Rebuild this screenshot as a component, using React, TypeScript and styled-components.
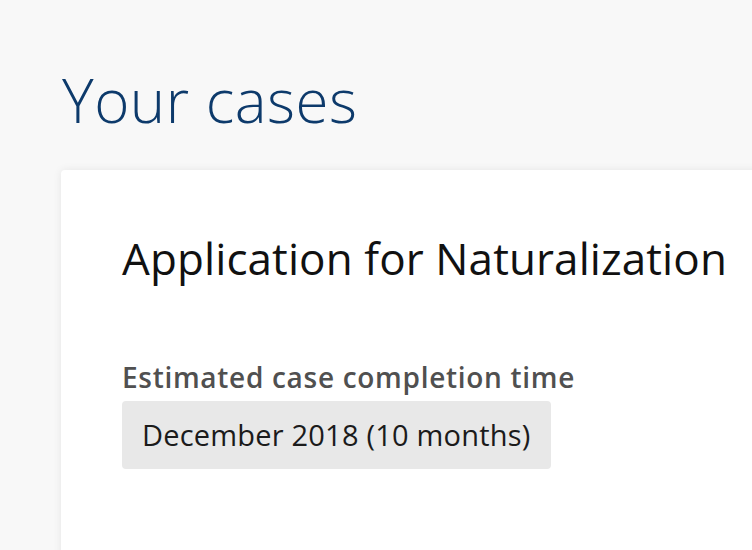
import React from "react";
import styled, { createGlobalStyle } from "styled-components";

const GlobalStyle = createGlobalStyle`
  html, body {
    margin: 0;
    padding: 0;
    background: #f8f8f8;
    font-family: "Open Sans", Lato, sans-serif;
    font-variant-ligatures: none;
    overflow: hidden;
  }
`;

const Page = styled.div`
  width: 752px;
  height: 550px;
  padding: 62px 0 0 61px;
  box-sizing: border-box;
  overflow: hidden;
`;

const Heading = styled.h1`
  margin: 0 0 0 1px;
  font-size: 60px;
  line-height: 76px;
  font-weight: 300;
  letter-spacing: 0.5px;
  color: #0d3a6b;
`;

const Card = styled.section`
  margin-top: 32px;
  width: 760px;
  min-height: 420px;
  background: #ffffff;
  border-radius: 4px;
  box-shadow: 0 0 8px rgba(0, 0, 0, 0.08);
  padding: 60px 0 0 61px;
  box-sizing: border-box;
`;

const CaseTitle = styled.h2`
  margin: 0;
  font-size: 44px;
  line-height: 56px;
  font-weight: 400;
  letter-spacing: 0.1px;
  color: #111111;
`;

const Label = styled.div`
  margin-top: 74px;
  font-size: 28px;
  line-height: 34px;
  font-weight: 600;
  letter-spacing: 0.7px;
  color: #505050;
`;

const Badge = styled.div`
  display: inline-block;
  margin-top: 7px;
  padding: 15px 21px 15px 20px;
  background: #e8e8e8;
  border-radius: 4px;
  font-size: 29px;
  line-height: 38px;
  letter-spacing: 0.2px;
  color: #1b1b1b;
`;

export default function App() {
  return (
    <Page>
      <GlobalStyle />
      <Heading>Your cases</Heading>
      <Card>
        <CaseTitle>Application for Naturalization</CaseTitle>
        <Label>Estimated case completion time</Label>
        <Badge>December 2018 (10 months)</Badge>
      </Card>
    </Page>
  );
}
